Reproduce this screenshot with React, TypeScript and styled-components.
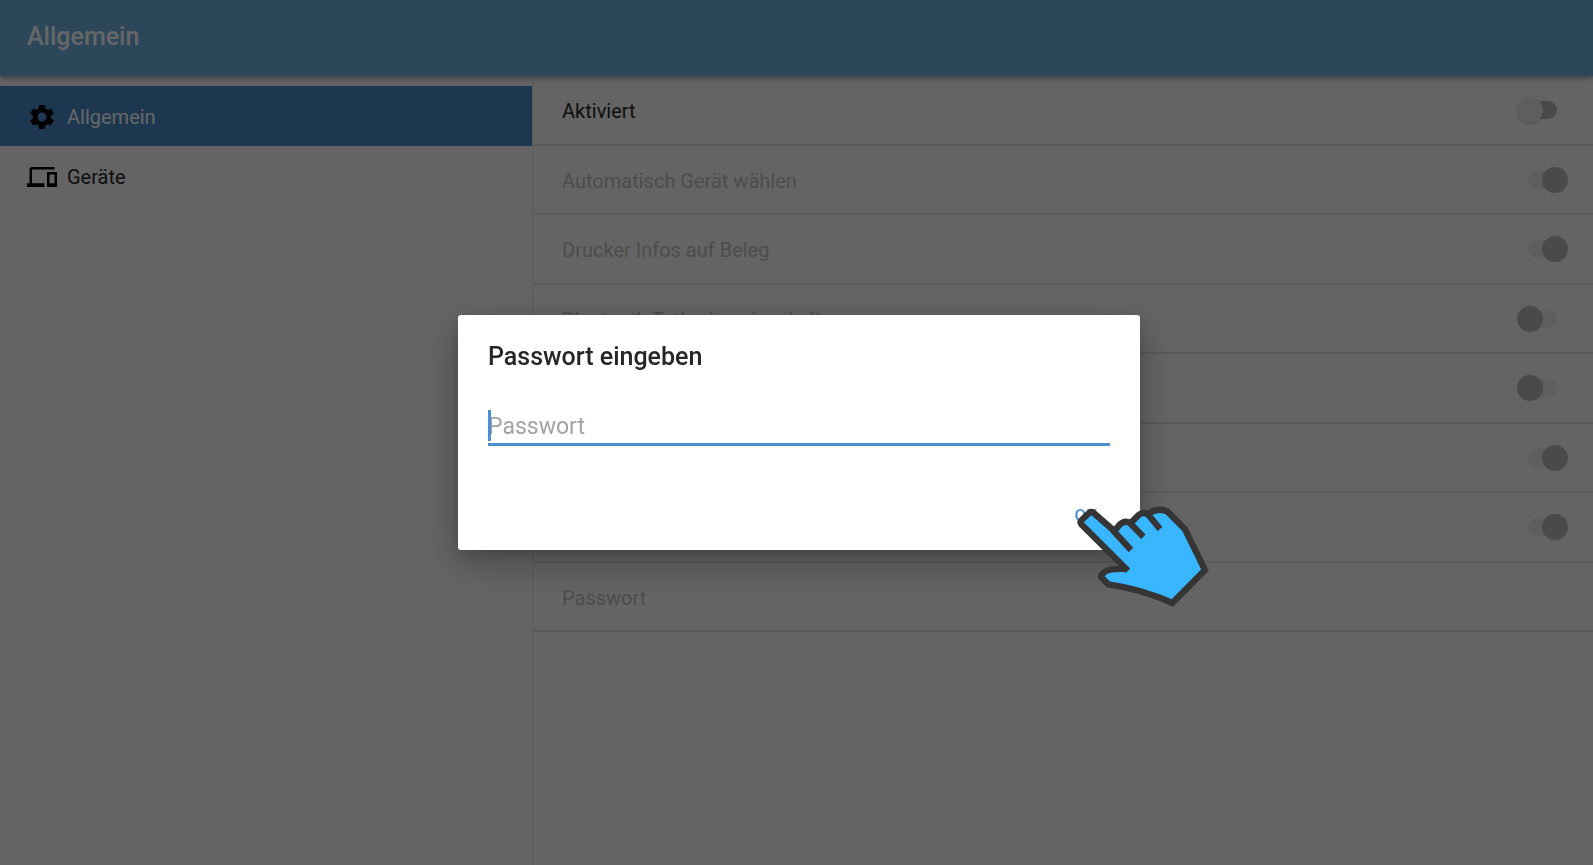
import React from "react";
import styled, { createGlobalStyle } from "styled-components";
import { MdDevices, MdSettings } from "react-icons/md";

const GlobalStyle = createGlobalStyle`
  *, *::before, *::after { box-sizing: border-box; }
  body {
    margin: 0;
    background: #fafafa;
    color: #262626;
    font-family: Roboto, "Noto Sans", sans-serif;
    font-size: 20px;
    line-height: 24px;
  }
`;

const Page = styled.div`
  min-height: 100vh;
  display: flex;
  flex-direction: column;
`;

const AppBar = styled.header`
  position: relative;
  display: flex;
  align-items: center;
  min-height: 76px;
  padding: 0 27px 2px;
  background: #70b1e1;
  box-shadow: 0 1px 6px rgba(0, 0, 0, 0.5);
  color: #fff;
`;

const Title = styled.h1`
  margin: 0;
  font-size: 25px;
  font-weight: 500;
  line-height: 32px;
`;

const Content = styled.div`
  flex: 1;
  display: flex;
`;

const Sidebar = styled.nav`
  flex: 0 0 33.4%;
  padding-top: 10px;
`;

const NavItem = styled.a<{ $active?: boolean }>`
  display: flex;
  align-items: center;
  gap: 10px;
  height: 60px;
  padding: 2px 27px 0;
  background: ${(p) => (p.$active ? "#4d8aca" : "transparent")};
  color: ${(p) => (p.$active ? "#fff" : "#262626")};
  text-decoration: none;

  svg {
    color: #000;
  }
`;

const Settings = styled.main`
  flex: 1;
  border-left: 2px solid #ededed;
`;

const SettingsList = styled.div`
  display: grid;
  grid-template-rows: repeat(8, 1fr);
  min-height: 556px;
`;

const SettingRow = styled.label<{ $disabled?: boolean }>`
  display: flex;
  align-items: center;
  justify-content: space-between;
  padding: 3px 25px 0 28px;
  border-bottom: 2px solid #e0e0e0;
  color: ${(p) => (p.$disabled ? "#c0c0c0" : "#262626")};
`;

const Switch = styled.input`
  appearance: none;
  position: relative;
  width: 51px;
  height: 26px;
  margin: 0 0 2px auto;

  &::before {
    content: "";
    position: absolute;
    inset: 4px 11px;
    border-radius: 9px;
    background: #bababa;
  }

  &::after {
    content: "";
    position: absolute;
    top: 0;
    left: 0;
    width: 26px;
    height: 26px;
    border-radius: 50%;
    background: #ececec;
    box-shadow: 0 1px 2px rgba(0, 0, 0, 0.2);
  }

  &:checked::after {
    left: 25px;
  }

  &:disabled::before {
    background: #ebebeb;
  }

  &:disabled::after {
    background: #bababa;
    box-shadow: none;
  }
`;

const Backdrop = styled.div`
  position: fixed;
  inset: 0;
  display: flex;
  align-items: center;
  justify-content: center;
  padding-left: 5px;
  background: rgba(0, 0, 0, 0.6);
`;

const Dialog = styled.form`
  width: 682px;
  max-width: 90%;
  padding: 26px 30px 18px;
  border-radius: 3px;
  background: #fff;
  box-shadow: 0 12px 36px rgba(0, 0, 0, 0.3), 0 4px 12px rgba(0, 0, 0, 0.12);
`;

const DialogTitle = styled.h2`
  margin: 0 0 37px;
  font-size: 25px;
  font-weight: 500;
  line-height: 32px;
`;

const Field = styled.div`
  position: relative;
  height: 36px;
  border-bottom: 3px solid #4a8fd0;

  &::before {
    content: "";
    position: absolute;
    left: 0;
    top: 0;
    width: 3px;
    height: 31px;
    background: #4a8fd0;
  }
`;

const PasswordInput = styled.input`
  display: block;
  width: 100%;
  height: 33px;
  padding: 0;
  border: 0;
  outline: 0;
  background: transparent;
  color: #262626;
  font: inherit;
  font-size: 23px;

  &::placeholder {
    color: #a3a3a3;
    opacity: 1;
  }
`;

const Actions = styled.div`
  display: flex;
  justify-content: flex-end;
  margin-top: 51px;
  padding-right: 13px;
`;

const OkButton = styled.button`
  position: relative;
  height: 35px;
  padding: 0;
  border: 0;
  background: none;
  color: #4a8fd0;
  font: inherit;
  font-size: 17px;
  font-weight: 500;
`;

const Pointer = styled.svg`
  position: absolute;
  left: 0;
  top: 7px;
  width: 135px;
  height: 105px;
  pointer-events: none;
`;

const settings = [
  { label: "Aktiviert", on: false, enabled: true },
  { label: "Automatisch Gerät wählen", on: true },
  { label: "Drucker Infos auf Beleg", on: true },
  { label: "Bluetooth Tethering einschalten", on: false },
  { on: false },
  { on: true },
  { on: true },
];

const PointingHand = () => (
  <Pointer viewBox="70 70 405 315" aria-hidden="true">
    <g fill="#38b6ff" stroke="#353535" strokeWidth="19">
      <path
        strokeLinejoin="miter"
        d="M229 270L89 131Q84 125 89 119L112 97Q119 91 126 97L188 151L204 132Q219 117 237 127L261 103Q274 93 288 100Q320 79 348 93L400 146L460 268L362 367Q270 325 170 311L150 291Q146 287 151 281L160 273Q175 263 224 265"
      />
      <path fill="none" d="M182 147L238 208M234 126L275 168M286 98L325 145" />
    </g>
  </Pointer>
);

export default function App() {
  return (
    <>
      <GlobalStyle />
      <Page>
        <AppBar>
          <Title>Allgemein</Title>
        </AppBar>
        <Content>
          <Sidebar>
            <NavItem href="#allgemein" $active>
              <MdSettings size={30} />
              Allgemein
            </NavItem>
            <NavItem href="#geraete">
              <MdDevices size={30} />
              Geräte
            </NavItem>
          </Sidebar>
          <Settings>
            <SettingsList>
              {settings.map((s, i) => (
                <SettingRow key={i} $disabled={!s.enabled}>
                  {s.label}
                  <Switch
                    type="checkbox"
                    role="switch"
                    aria-label={s.label ?? `Option ${i + 1}`}
                    defaultChecked={s.on}
                    disabled={!s.enabled}
                  />
                </SettingRow>
              ))}
              <SettingRow as="div" $disabled>
                Passwort
              </SettingRow>
            </SettingsList>
          </Settings>
        </Content>
      </Page>
      <Backdrop>
        <Dialog role="dialog" aria-modal="true" aria-labelledby="dialog-title" onSubmit={(e) => e.preventDefault()}>
          <DialogTitle id="dialog-title">Passwort eingeben</DialogTitle>
          <Field>
            <PasswordInput type="password" placeholder="Passwort" aria-label="Passwort" />
          </Field>
          <Actions>
            <OkButton type="submit">
              OK
              <PointingHand />
            </OkButton>
          </Actions>
        </Dialog>
      </Backdrop>
    </>
  );
}
